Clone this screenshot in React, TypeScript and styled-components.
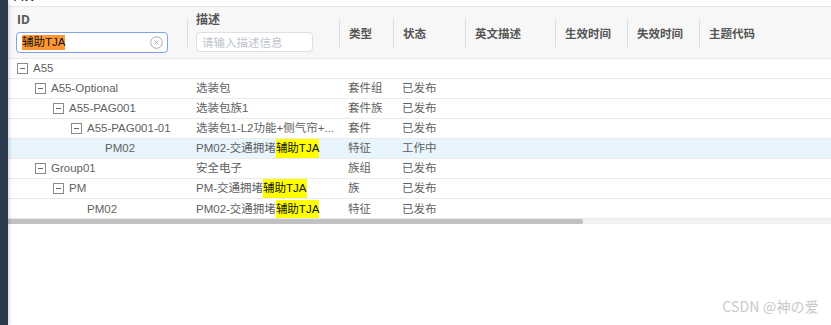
import React from "react";
import styled, { createGlobalStyle } from "styled-components";

const Global = createGlobalStyle`
  html, body { margin: 0; padding: 0; background: #fff; }
  body { font-family: "Liberation Sans", "Noto Sans CJK SC", sans-serif; font-size: 12px; color: #5a5a5a; }
  * { box-sizing: border-box; }
`;

const COLS = "180px 152px 54px 72px 90px 72px 72px 72px 1fr";

const Page = styled.div`
  display: flex;
  width: 831px;
  height: 325px;
  overflow: hidden;
  position: relative;
`;

const Sidebar = styled.div`
  width: 8px;
  flex: none;
  background: #2d3b4e;
  box-shadow: 1px 0 4px rgba(0, 0, 0, 0.18);
  z-index: 1;
`;

const Main = styled.div`
  flex: 1;
  min-width: 0;
  display: flex;
  flex-direction: column;
`;

const TopStrip = styled.div`
  height: 7px;
  overflow: hidden;
  border-bottom: 1px solid #e6e6e6;
  padding-left: 6px;
  display: flex;
  align-items: flex-end;
`;

const TopTitle = styled.span`
  font-size: 14px;
  line-height: 14px;
  color: #333;
  margin-bottom: 3px;
`;

const HeaderRow = styled.div`
  display: grid;
  grid-template-columns: ${COLS};
  height: 52px;
  background: #f7f7f7;
  border-bottom: 1px solid #e8e8e8;
`;

const HeadCell = styled.div<{ $sep?: boolean; $stack?: boolean }>`
  position: relative;
  padding: ${(p) => (p.$stack ? "5px 0 0 8px" : "0 0 0 9px")};
  display: flex;
  flex-direction: ${(p) => (p.$stack ? "column" : "row")};
  align-items: ${(p) => (p.$stack ? "flex-start" : "center")};
  font-weight: 600;
  color: #555;
  font-size: 11.5px;
  &::before {
    content: "";
    display: ${(p) => (p.$sep ? "block" : "none")};
    position: absolute;
    left: -1px;
    top: 12px;
    height: 28px;
    width: 1px;
    background: #dcdcdc;
  }
`;

const HeadLabel = styled.div<{ $bold?: boolean }>`
  line-height: 16px;
  height: 16px;
  font-weight: ${(p) => (p.$bold ? 700 : 600)};
  font-size: 12px;
  font-family: ${(p) => (p.$bold ? '"Open Sans", "Noto Sans CJK SC", sans-serif' : "inherit")};
  margin-left: ${(p) => (p.$bold ? "1px" : "0")};
`;

const InputBox = styled.div<{ $focus?: boolean; $w: number }>`
  margin-top: 4px;
  width: ${(p) => p.$w}px;
  height: ${(p) => (p.$focus ? 21 : 20)}px;
  border: 1px solid ${(p) => (p.$focus ? "#7ea1f2" : "#dcdfe6")};
  border-radius: 4px;
  background: #fff;
  display: flex;
  align-items: center;
  padding: 0 4px 0 5px;
  font-weight: 400;
  font-size: 11.5px;
`;

const Found = styled.span`
  background: #ff9632;
  color: #111;
  line-height: 15px;
`;

const Placeholder = styled.span`
  color: #c0c4cc;
`;

const ClearIcon = styled.svg`
  margin-left: auto;
  flex: none;
`;

const Body = styled.div``;

const Row = styled.div<{ $active?: boolean }>`
  display: grid;
  grid-template-columns: ${COLS};
  height: 20px;
  border-bottom: 1px solid #ebebeb;
  background: ${(p) => (p.$active ? "#e8f5fc" : "#fff")};
  &:last-child {
    border-bottom: none;
  }
`;

const Cell = styled.div`
  padding-left: 8px;
  display: flex;
  align-items: center;
  white-space: nowrap;
  overflow: hidden;
  color: #5f5f5f;
  font-size: 11.5px;
  line-height: 19px;
`;

const TreeCell = styled(Cell)<{ $level: number }>`
  padding-left: ${(p) => 9 + p.$level * 18}px;
`;

const Toggle = styled.span`
  width: 11px;
  height: 11px;
  border: 1px solid #8a8a8a;
  flex: none;
  margin-right: 5px;
  position: relative;
  display: inline-block;
  &::after {
    content: "";
    position: absolute;
    left: 2px;
    right: 2px;
    top: 4px;
    height: 1px;
    background: #6a6a6a;
  }
`;

const LeafSpacer = styled.span`
  width: 16px;
  flex: none;
  display: inline-block;
`;

const Mark = styled.span`
  background: #ffff00;
  color: #111;
`;

const Scrollbar = styled.div`
  height: 6px;
  margin-top: -1px;
  background: #f1f1f1;
  border-top: 1px solid #e9e9e9;
  display: flex;
`;

const Thumb = styled.div`
  width: 575px;
  height: 5px;
  background: #c1c1c1;
  border-radius: 0 2px 2px 0;
`;

const Watermark = styled.div`
  position: absolute;
  right: 12px;
  bottom: 9px;
  font-size: 14px;
  color: #c9c9c9;
  font-family: "Noto Sans CJK JP", "Noto Sans CJK SC", sans-serif;
  letter-spacing: 0.2px;
`;

type Node = {
  id: string;
  level: number;
  leaf?: boolean;
  desc: React.ReactNode;
  type: string;
  status: string;
  active?: boolean;
};

const hit = <Mark>辅助TJA</Mark>;

const rows: Node[] = [
  { id: "A55", level: 0, desc: "", type: "", status: "" },
  { id: "A55-Optional", level: 1, desc: "选装包", type: "套件组", status: "已发布" },
  { id: "A55-PAG001", level: 2, desc: "选装包族1", type: "套件族", status: "已发布" },
  { id: "A55-PAG001-01", level: 3, desc: "选装包1-L2功能+侧气帘+...", type: "套件", status: "已发布" },
  { id: "PM02", level: 4, leaf: true, desc: <>PM02-交通拥堵{hit}</>, type: "特征", status: "工作中", active: true },
  { id: "Group01", level: 1, desc: "安全电子", type: "族组", status: "已发布" },
  { id: "PM", level: 2, desc: <>PM-交通拥堵{hit}</>, type: "族", status: "已发布" },
  { id: "PM02", level: 3, leaf: true, desc: <>PM02-交通拥堵{hit}</>, type: "特征", status: "已发布" },
];

const headers = ["类型", "状态", "英文描述", "生效时间", "失效时间", "主题代码"];

export default function App() {
  return (
    <Page>
      <Global />
      <Sidebar />
      <Main>
        <TopStrip>
          <TopTitle>AW</TopTitle>
        </TopStrip>
        <HeaderRow>
          <HeadCell $stack>
            <HeadLabel $bold>ID</HeadLabel>
            <InputBox $focus $w={152}>
              <Found>辅助TJA</Found>
              <ClearIcon width="13" height="13" viewBox="0 0 13 13">
                <circle cx="6.5" cy="6.5" r="5.8" fill="none" stroke="#a8abb2" strokeWidth="1" />
                <path d="M4.5 4.5 L8.5 8.5 M8.5 4.5 L4.5 8.5" stroke="#a8abb2" strokeWidth="1" />
              </ClearIcon>
            </InputBox>
          </HeadCell>
          <HeadCell $stack $sep>
            <HeadLabel>描述</HeadLabel>
            <InputBox $w={117}>
              <Placeholder>请输入描述信息</Placeholder>
            </InputBox>
          </HeadCell>
          {headers.map((h) => (
            <HeadCell key={h} $sep>
              {h}
            </HeadCell>
          ))}
        </HeaderRow>
        <Body>
          {rows.map((r, i) => (
            <Row key={i} $active={r.active}>
              <TreeCell $level={r.level}>
                {r.leaf ? <LeafSpacer /> : <Toggle />}
                {r.id}
              </TreeCell>
              <Cell>{r.desc}</Cell>
              <Cell>{r.type}</Cell>
              <Cell>{r.status}</Cell>
              <Cell />
              <Cell />
              <Cell />
              <Cell />
              <Cell />
            </Row>
          ))}
        </Body>
        <Scrollbar>
          <Thumb />
        </Scrollbar>
      </Main>
      <Watermark>CSDN @神の爱</Watermark>
    </Page>
  );
}
